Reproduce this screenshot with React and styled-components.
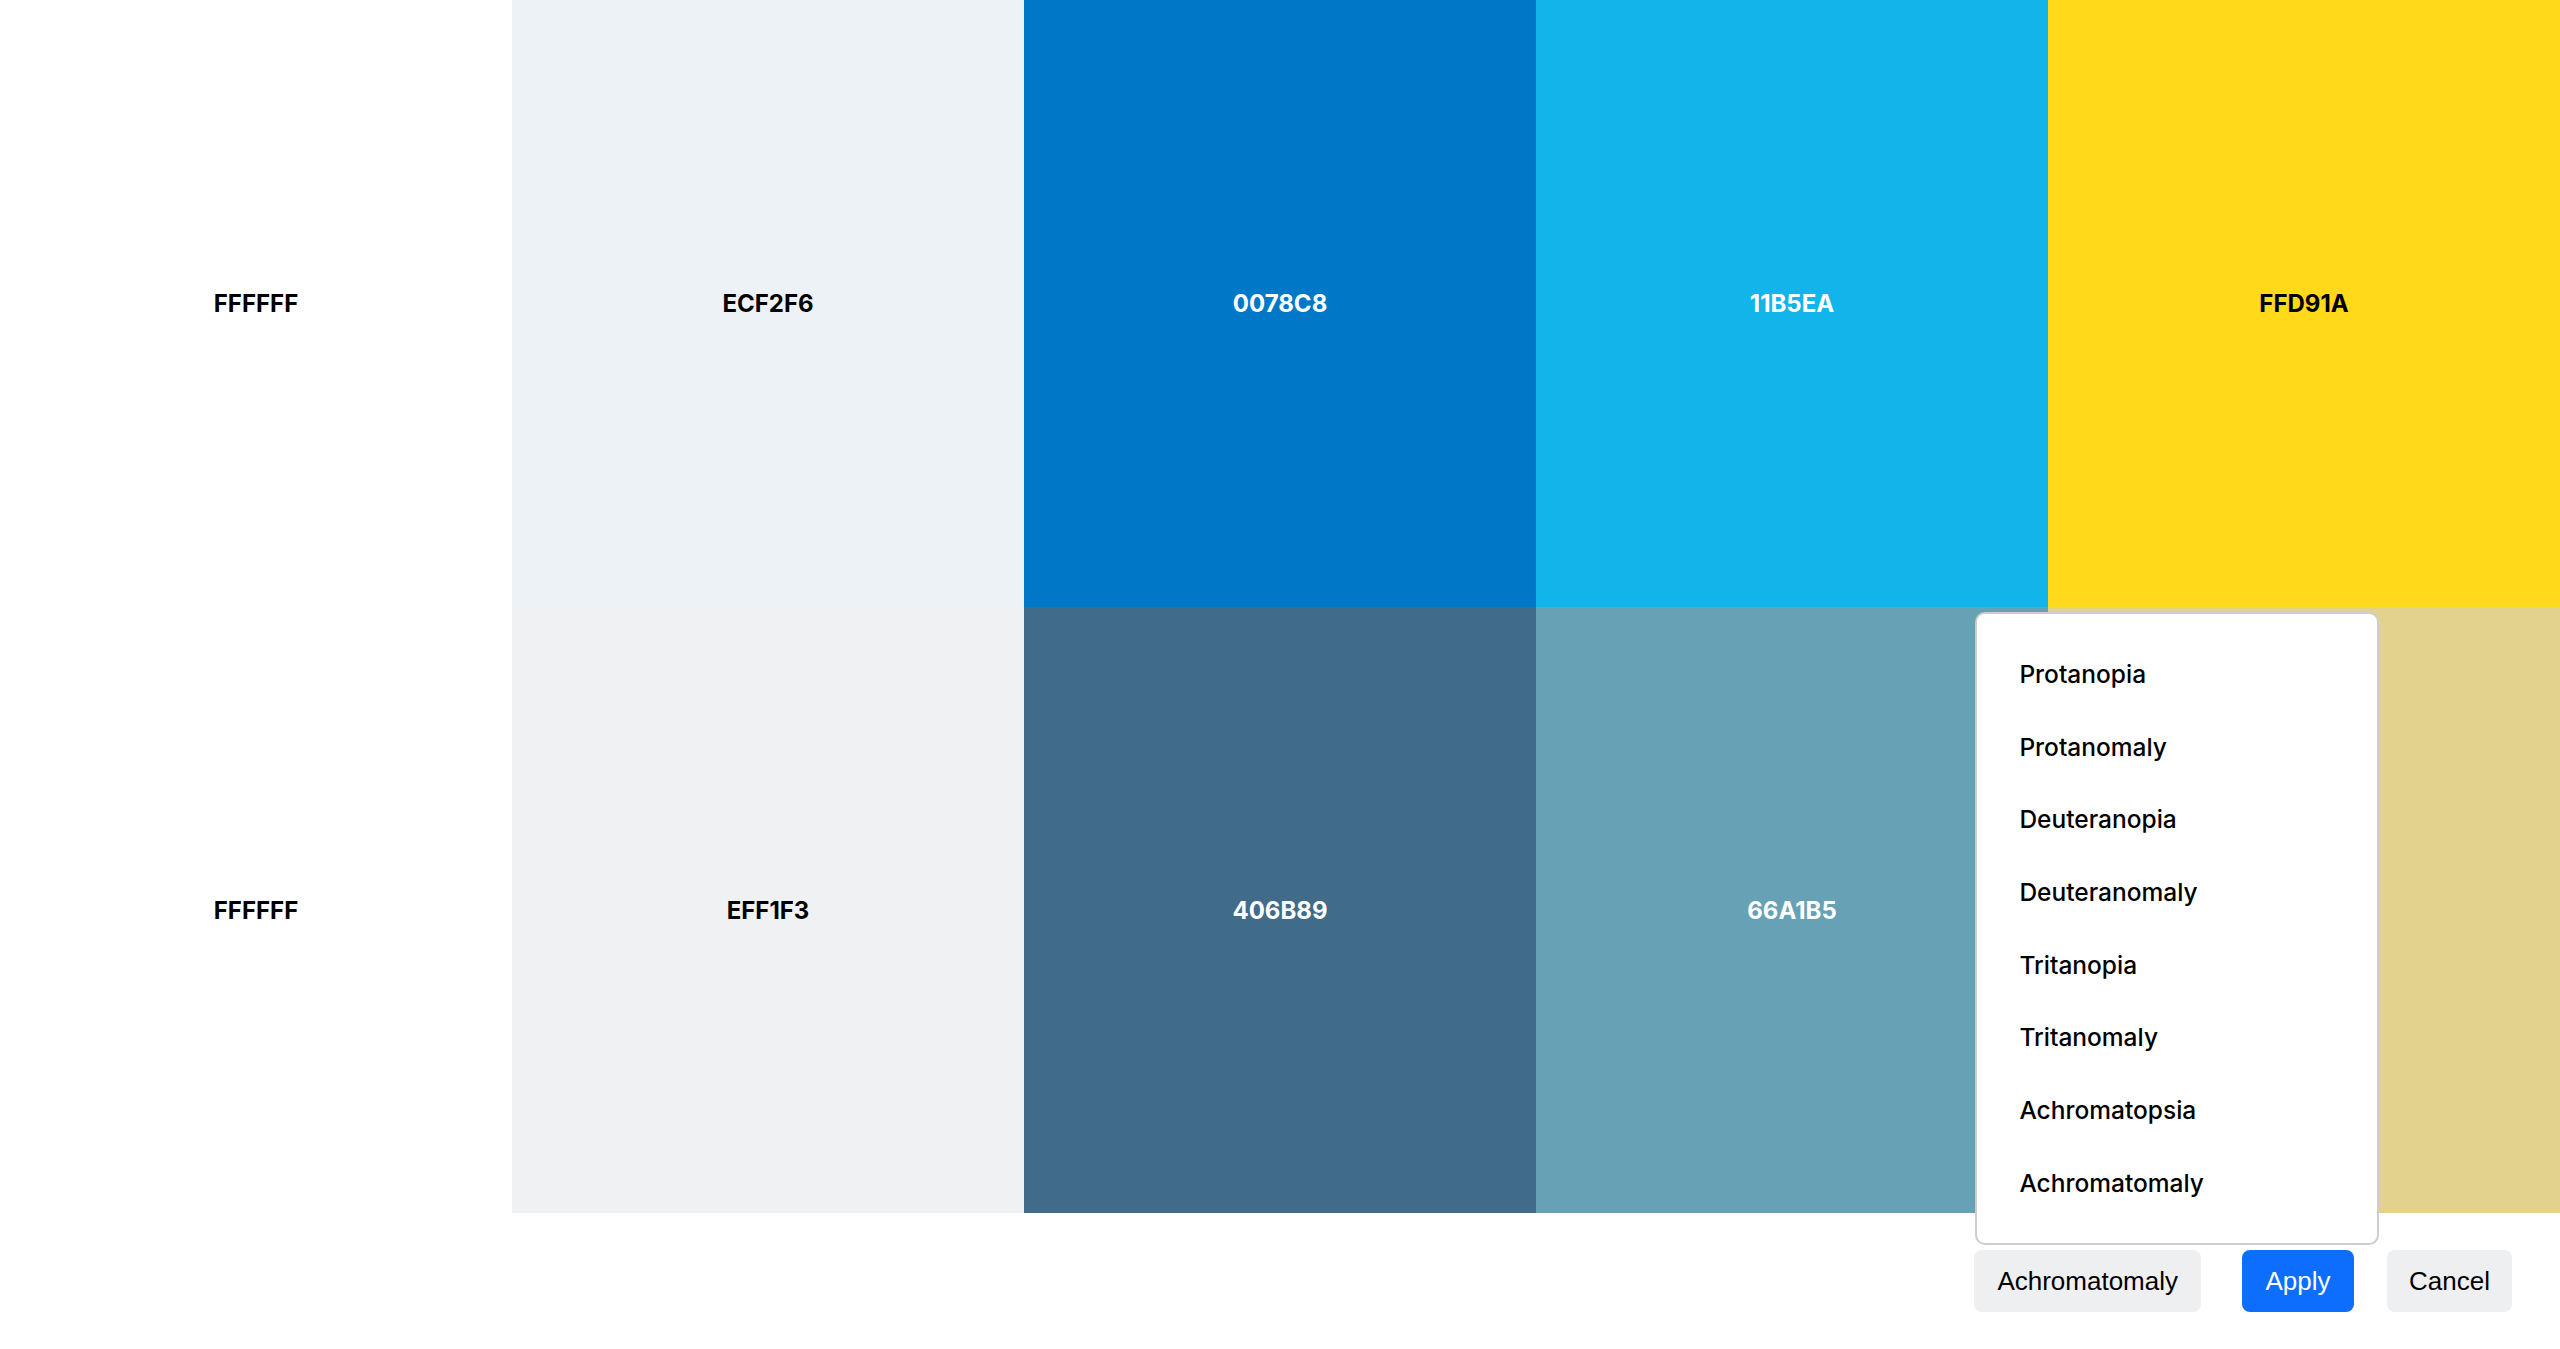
import styled, { createGlobalStyle } from "styled-components";

const GlobalStyle = createGlobalStyle`
  html, body {
    margin: 0;
    padding: 0;
    background: #fff;
  }
  body {
    font-family: Inter, "Noto Sans", sans-serif;
  }
`;

const Grid = styled.div`
  display: grid;
  grid-template-columns: repeat(5, 1fr);
  grid-template-rows: 607px 606px;
`;

const Swatch = styled.div`
  display: flex;
  align-items: center;
  justify-content: center;
  background: ${(p) => `#${p.$hex}`};
  color: ${(p) => (p.$dark ? "#fff" : "#000")};
  font-size: 24px;
  font-weight: 700;
`;

const Toolbar = styled.div`
  display: flex;
  justify-content: flex-end;
  align-items: center;
  margin-top: 37px;
  padding-right: 48px;
`;

const SelectWrap = styled.div`
  position: relative;
`;

const Button = styled.button`
  height: 62px;
  border: none;
  border-radius: 8px;
  padding: 0 ${(p) => p.$pad || 22}px;
  margin-left: ${(p) => p.$gap || 0}px;
  font-family: "Liberation Sans", Arial, sans-serif;
  font-size: 26px;
  background: ${(p) => (p.$primary ? "#0d6efd" : "#eeeff1")};
  color: ${(p) => (p.$primary ? "#fff" : "#000")};
  cursor: pointer;
`;

const Menu = styled.ul`
  position: absolute;
  left: 1px;
  bottom: calc(100% + 5px);
  width: 404px;
  box-sizing: border-box;
  margin: 0;
  padding: 24px 0;
  list-style: none;
  background: #fff;
  border: 2px solid #cdcdcd;
  border-radius: 10px;
`;

const MenuItem = styled.li`
  height: 72.7px;
  display: flex;
  align-items: center;
  padding-left: 42px;
  font-size: 24.5px;
  font-weight: 500;
  color: #000;
`;

const swatches = [
  { hex: "FFFFFF" },
  { hex: "ECF2F6" },
  { hex: "0078C8", dark: true },
  { hex: "11B5EA", dark: true },
  { hex: "FFD91A" },
  { hex: "FFFFFF" },
  { hex: "EFF1F3" },
  { hex: "406B89", dark: true },
  { hex: "66A1B5", dark: true },
  { hex: "E2D28E" },
];

const modes = [
  "Protanopia",
  "Protanomaly",
  "Deuteranopia",
  "Deuteranomaly",
  "Tritanopia",
  "Tritanomaly",
  "Achromatopsia",
  "Achromatomaly",
];

export default function App() {
  return (
    <>
      <GlobalStyle />
      <Grid>
        {swatches.map((s, i) => (
          <Swatch key={i} $hex={s.hex} $dark={s.dark}>
            {s.hex}
          </Swatch>
        ))}
      </Grid>
      <Toolbar>
        <SelectWrap>
          <Button $pad={23}>Achromatomaly</Button>
          <Menu>
            {modes.map((m) => (
              <MenuItem key={m}>{m}</MenuItem>
            ))}
          </Menu>
        </SelectWrap>
        <Button $primary $pad={23.5} $gap={41}>
          Apply
        </Button>
        <Button $gap={33}>Cancel</Button>
      </Toolbar>
    </>
  );
}
